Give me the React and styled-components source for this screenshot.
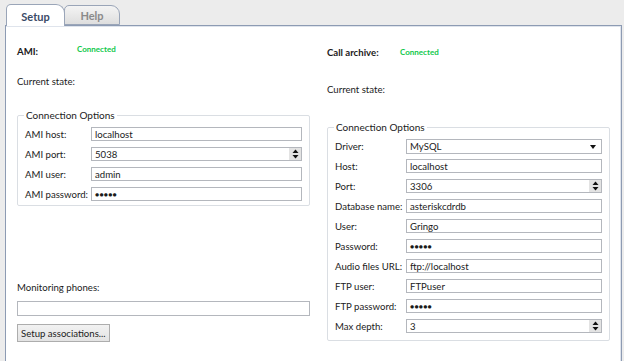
import React from "react"
import styled, { createGlobalStyle } from "styled-components"

const GlobalStyle = createGlobalStyle`
  html, body {
    margin: 0;
    padding: 0;
    background: #ececec;
  }
  body {
    font-family: Lato, "Noto Sans", sans-serif;
    font-size: 9.6px;
    color: #1b1b1b;
  }
`

const Window = styled.div`
  width: 624px;
  height: 361px;
  overflow: hidden;
  background: #ececec;
  display: flex;
  flex-direction: column;
`

const TabBar = styled.div`
  height: 25px;
  padding-left: 6px;
  display: flex;
  align-items: flex-end;
  box-sizing: border-box;
`

const Tab = styled.div`
  box-sizing: border-box;
  height: ${props => (props.active ? "22px" : "20px")};
  width: ${props => (props.active ? "59px" : "56px")};
  margin-bottom: ${props => (props.active ? "-1px" : "0")};
  margin-left: ${props => (props.active ? "0" : "-1px")};
  border: 1px solid #9aa5b8;
  border-bottom: ${props => (props.active ? "none" : "1px solid #9aa5b8")};
  border-radius: 5px 9px 0 0;
  background: ${props =>
    props.active ? "#fff" : "linear-gradient(#f4f4f4, #dedede)"};
  color: ${props => (props.active ? "#3a4a66" : "#8a8a8a")};
  font-weight: bold;
  font-size: 11px;
  display: flex;
  align-items: center;
  justify-content: center;
  padding-top: 1px;
  position: relative;
  z-index: ${props => (props.active ? 2 : 1)};
`

const Pane = styled.div`
  flex: 1;
  margin: 0 2px 0 5px;
  background: #fff;
  border: 1px solid #8d9bb3;
  border-bottom: none;
  box-shadow: inset 0 1px 0 #dfe4ec, inset -1px 0 0 #dfe4ec;
  padding: 0 11px 0 11px;
  display: grid;
  grid-template-columns: 293px 283px;
  column-gap: 17px;
`

const Column = styled.div`
  display: flex;
  flex-direction: column;
  padding-top: ${props => props.top}px;
`

const StatusRow = styled.div`
  display: flex;
  align-items: ${props => (props.raised ? "flex-start" : "center")};
  height: 14px;
`

const StatusLabel = styled.div`
  font-weight: bold;
  width: ${props => props.width}px;
  padding-top: ${props => (props.raised ? "2px" : "0")};
`

const Connected = styled.div`
  color: #0fc84a;
  font-size: 8px;
  font-weight: bold;
`

const Plain = styled.div`
  margin-top: ${props => props.gap}px;
  height: 14px;
  line-height: 14px;
  white-space: nowrap;
`

const Group = styled.fieldset`
  margin: ${props => props.gap}px 0 0 0;
  padding: 6px 7px ${props => props.bottom}px 7px;
  border: 1px solid #dadee3;
  border-radius: 2px;
  display: flex;
  flex-direction: column;
  gap: 6px;
  min-width: 0;

  legend {
    padding: 0 2px;
    margin-left: -1px;
    line-height: 12px;
    font-size: 10px;
  }
`

const Row = styled.div`
  display: grid;
  grid-template-columns: ${props => props.label}px 1fr;
  align-items: center;
  height: 14px;
  white-space: nowrap;
`

const Field = styled.div`
  box-sizing: border-box;
  height: ${props => (props.tall ? "15px" : "14px")};
  border: 1px solid #b4b7bd;
  background: #fff;
  display: flex;
  align-items: center;
  padding-left: 3px;
  font-size: ${props => (props.dots ? "7px" : "9.6px")};
  letter-spacing: ${props => (props.dots ? "0.2px" : "0")};
  position: relative;
`

const Spinner = styled.div`
  position: absolute;
  right: 0;
  top: 0;
  bottom: 0;
  width: 12px;
  background: #e3e3e3;
  display: flex;
  align-items: center;
  justify-content: center;
`

const ComboArrow = styled.div`
  position: absolute;
  right: 5px;
  top: 5px;
  width: 0;
  height: 0;
  border-left: 3.5px solid transparent;
  border-right: 3.5px solid transparent;
  border-top: 4px solid #111;
`

const WideInput = styled.div`
  margin-top: 6px;
  box-sizing: border-box;
  height: 15px;
  border: 1px solid #b4b7bd;
  background: #fff;
`

const Button = styled.div`
  margin-top: 8px;
  box-sizing: border-box;
  align-self: flex-start;
  height: 18px;
  padding: 0 3px;
  border: 1px solid #adadad;
  background: linear-gradient(#f2f2f2, #e3e3e3);
  display: flex;
  align-items: center;
  white-space: nowrap;
`

function SpinIcon() {
  return (
    <Spinner>
      <svg width="7" height="10" viewBox="0 0 7 10">
        <path d="M3.5 0.5 L6.5 4 L0.5 4 Z" fill="#111" />
        <path d="M0.5 6 L6.5 6 L3.5 9.5 Z" fill="#111" />
      </svg>
    </Spinner>
  )
}

function Input({ value, spin, combo, dots, tall }) {
  return (
    <Field dots={dots} tall={tall}>
      {value}
      {spin && <SpinIcon />}
      {combo && <ComboArrow />}
    </Field>
  )
}

const amiFields = [
  { label: "AMI host:", value: "localhost" },
  { label: "AMI port:", value: "5038", spin: true },
  { label: "AMI user:", value: "admin" },
  { label: "AMI password:", value: "●●●●●", dots: true },
]

const archiveFields = [
  { label: "Driver:", value: "MySQL", combo: true, tall: true },
  { label: "Host:", value: "localhost" },
  { label: "Port:", value: "3306", spin: true },
  { label: "Database name:", value: "asteriskcdrdb" },
  { label: "User:", value: "Gringo" },
  { label: "Password:", value: "●●●●●", dots: true },
  { label: "Audio files URL:", value: "ftp://localhost" },
  { label: "FTP user:", value: "FTPuser" },
  { label: "FTP password:", value: "●●●●●", dots: true },
  { label: "Max depth:", value: "3", spin: true },
]

export default function App() {
  return (
    <>
      <GlobalStyle />
      <Window>
        <TabBar>
          <Tab active>Setup</Tab>
          <Tab>Help</Tab>
        </TabBar>
        <Pane>
          <Column top={18}>
            <StatusRow raised>
              <StatusLabel width={60} raised>
                AMI:
              </StatusLabel>
              <Connected>Connected</Connected>
            </StatusRow>
            <Plain gap={17}>Current state:</Plain>
            <Group gap={20} bottom={4}>
              <legend>Connection Options</legend>
              {amiFields.map(f => (
                <Row key={f.label} label={66}>
                  <span>{f.label}</span>
                  <Input {...f} />
                </Row>
              ))}
            </Group>
            <Plain gap={75}>Monitoring phones:</Plain>
            <WideInput />
            <Button>Setup associations...</Button>
          </Column>
          <Column top={19}>
            <StatusRow>
              <StatusLabel width={73}>Call archive:</StatusLabel>
              <Connected>Connected</Connected>
            </StatusRow>
            <Plain gap={24}>Current state:</Plain>
            <Group gap={24} bottom={7}>
              <legend>Connection Options</legend>
              {archiveFields.map(f => (
                <Row key={f.label} label={71}>
                  <span>{f.label}</span>
                  <Input {...f} />
                </Row>
              ))}
            </Group>
          </Column>
        </Pane>
      </Window>
    </>
  )
}
